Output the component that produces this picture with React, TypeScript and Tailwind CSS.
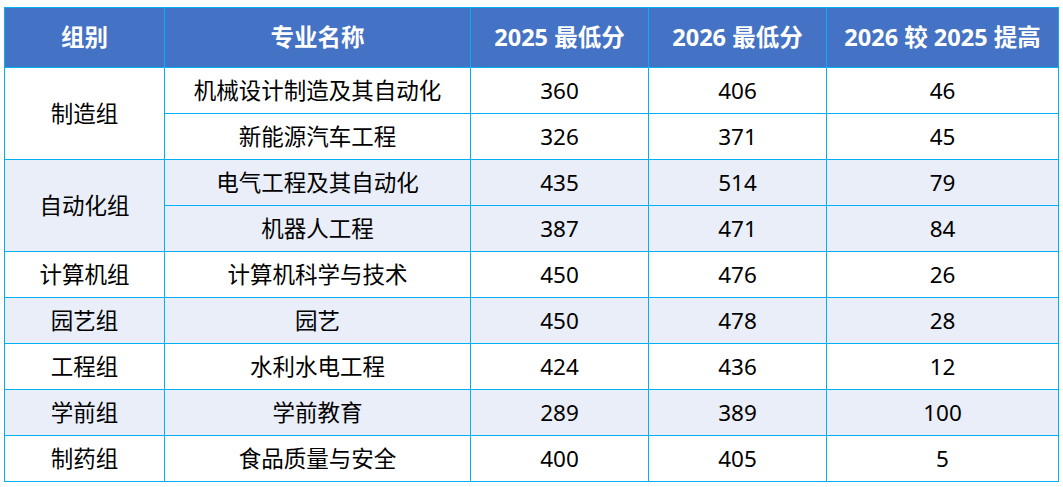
import React from 'react'

type Row = { group?: string; span?: number; major: string; a: string; b: string; diff: string; shade: boolean }

const rows: Row[] = [
  { group: '制造组', span: 2, major: '机械设计制造及其自动化', a: '360', b: '406', diff: '46', shade: false },
  { major: '新能源汽车工程', a: '326', b: '371', diff: '45', shade: false },
  { group: '自动化组', span: 2, major: '电气工程及其自动化', a: '435', b: '514', diff: '79', shade: true },
  { major: '机器人工程', a: '387', b: '471', diff: '84', shade: true },
  { group: '计算机组', span: 1, major: '计算机科学与技术', a: '450', b: '476', diff: '26', shade: false },
  { group: '园艺组', span: 1, major: '园艺', a: '450', b: '478', diff: '28', shade: true },
  { group: '工程组', span: 1, major: '水利水电工程', a: '424', b: '436', diff: '12', shade: false },
  { group: '学前组', span: 1, major: '学前教育', a: '289', b: '389', diff: '100', shade: true },
  { group: '制药组', span: 1, major: '食品质量与安全', a: '400', b: '405', diff: '5', shade: false },
]

const th = 'border border-[#00b0f0] text-center font-bold text-white text-[23.5px]'
const td = 'border border-[#00b0f0] text-center p-0 pt-[1px]'

function App() {
  return (
    <div
      className="min-h-screen bg-white pl-[4px] pt-[7px]"
      style={{ fontFamily: '"Noto Sans", "Noto Sans CJK SC", sans-serif' }}
    >
      <table className="border-collapse text-[22.5px] leading-none text-black table-fixed w-[1054px]">
        <colgroup>
          <col className="w-[160px]" />
          <col className="w-[306px]" />
          <col className="w-[178px]" />
          <col className="w-[178px]" />
          <col className="w-[232px]" />
        </colgroup>
        <thead>
          <tr className="h-[60px] bg-[#4472c4]">
            <th className={th}>组别</th>
            <th className={th}>专业名称</th>
            <th className={th}>2025 最低分</th>
            <th className={th}>2026 最低分</th>
            <th className={th}>2026 较 2025 提高</th>
          </tr>
        </thead>
        <tbody>
          {rows.map((r, i) => (
            <tr key={i} className={`h-[46px] ${r.shade ? 'bg-[#e9eef8]' : 'bg-white'}`}>
              {r.group && (
                <td className={td} rowSpan={r.span}>
                  {r.group}
                </td>
              )}
              <td className={td}>{r.major}</td>
              <td className={td}>{r.a}</td>
              <td className={td}>{r.b}</td>
              <td className={td}>{r.diff}</td>
            </tr>
          ))}
        </tbody>
      </table>
    </div>
  )
}

export default App
